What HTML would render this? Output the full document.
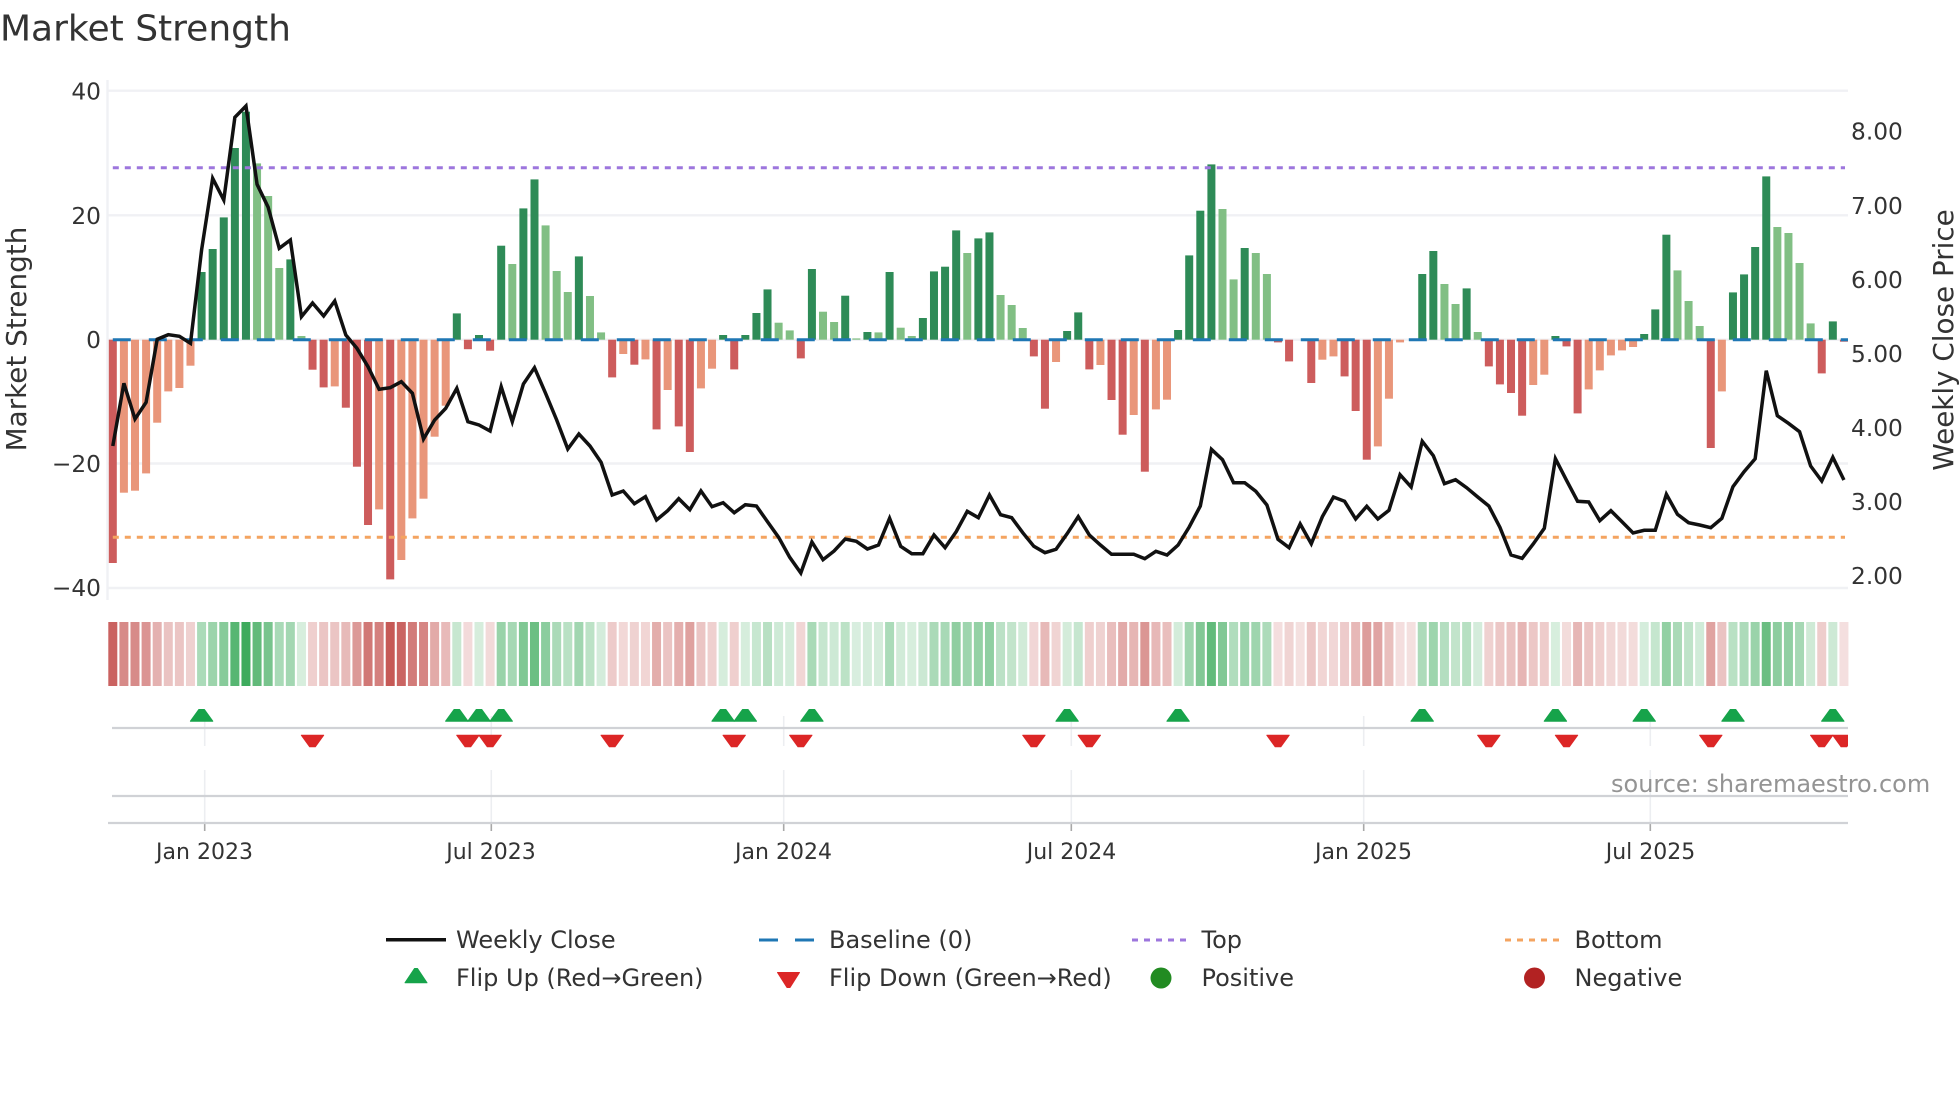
<!DOCTYPE html>
<html><head><meta charset="utf-8"><title>Market Strength</title>
<style>
html,body{margin:0;padding:0;background:#fff;width:1960px;height:1102px;overflow:hidden}
svg{display:block;position:absolute;left:0;top:0}
text{font-family:"DejaVu Sans","Liberation Sans",sans-serif;fill:#333}
.t{font-size:23.3px}.x{font-size:22px}.l{font-size:24px}
</style></head><body>
<svg id="s" width="1960" height="1102" viewBox="0 0 1960 1102" xmlns="http://www.w3.org/2000/svg">
<defs><clipPath id="c"><rect x="108" y="700" width="1740" height="60"/></clipPath></defs>
<g id="grid" stroke="#f0f1f4" stroke-width="2.400">
<line x1="108" x2="1848" y1="90.7" y2="90.7"/><line x1="108" x2="1848" y1="215.3" y2="215.3"/><line x1="108" x2="1848" y1="339.7" y2="339.7"/><line x1="108" x2="1848" y1="463.5" y2="463.5"/><line x1="108" x2="1848" y1="588" y2="588"/>
<line x1="107.500" x2="107.500" y1="80" y2="600"/>
</g>
<g id="vg"></g>
<g id="bars"></g>
<line x1="112.800" x2="1848" y1="339.700" y2="339.700" stroke="#1f77b4" stroke-width="3" stroke-dasharray="18 18"/>
<line x1="112.800" x2="1845" y1="167.700" y2="167.700" stroke="#9d76dd" stroke-width="3" stroke-dasharray="6 6"/>
<line x1="112.800" x2="1845" y1="537.300" y2="537.300" stroke="#f4a460" stroke-width="3" stroke-dasharray="6 6"/>
<polyline id="ln" fill="none" stroke="#111" stroke-width="3.500" stroke-linejoin="miter"/>
<g id="heat"></g>
<g stroke="#d0d2d6" stroke-width="2.200"><line x1="112" x2="1848" y1="728" y2="728"/><line x1="112" x2="1848" y1="796" y2="796"/><line x1="108" x2="1848" y1="823" y2="823"/></g>
<g id="flips" clip-path="url(#c)"></g>

<text x="0" y="40.500" font-size="36">Market Strength</text>
<g class="t" text-anchor="end">
<text class="t" x="101" y="99.300">40</text><text class="t" x="101" y="224">20</text><text class="t" x="101" y="348">0</text><text class="t" x="101" y="472">−20</text><text class="t" x="101" y="596">−40</text>
</g>
<g>
<text class="t" x="1851" y="139.300">8.00</text><text class="t" x="1851" y="214">7.00</text><text class="t" x="1851" y="288">6.00</text><text class="t" x="1851" y="362">5.00</text><text class="t" x="1851" y="436">4.00</text><text class="t" x="1851" y="510">3.00</text><text class="t" x="1851" y="584">2.00</text>
</g>
<text transform="translate(26 339) rotate(-90)" text-anchor="middle" font-size="27.800">Market Strength</text>
<text transform="translate(1953 340) rotate(-90)" text-anchor="middle" font-size="27.800">Weekly Close Price</text>
<g text-anchor="middle">
<text class="x" x="204.500" y="859">Jan 2023</text><text class="x" x="491" y="859">Jul 2023</text><text class="x" x="783.500" y="859">Jan 2024</text><text class="x" x="1071.500" y="859">Jul 2024</text><text class="x" x="1363.500" y="859">Jan 2025</text><text class="x" x="1650.500" y="859">Jul 2025</text>
</g>
<text x="1611" y="792" font-size="24" style="fill:#949494">source: sharemaestro.com</text>

<line x1="386" x2="446" y1="939.700" y2="939.700" stroke="#111" stroke-width="3.500"/>
<line x1="759" x2="815" y1="940" y2="940" stroke="#1f77b4" stroke-width="3" stroke-dasharray="19 17"/>
<line x1="1132" x2="1188" y1="940" y2="940" stroke="#9d76dd" stroke-width="3" stroke-dasharray="6 6"/>
<line x1="1505" x2="1561" y1="940" y2="940" stroke="#f4a460" stroke-width="3" stroke-dasharray="6 6"/>
<path d="M414.500 968.500H417.500L427 982.800H405Z" fill="#16a34a" stroke="#16a34a" stroke-width="1" stroke-linejoin="round"/>
<path d="M787 987.500H790L799.500 972.500H777.500Z" fill="#dc2626" stroke="#dc2626" stroke-width="1" stroke-linejoin="round"/>
<circle cx="1161" cy="978" r="10.500" fill="#228b22"/>
<circle cx="1534.500" cy="978" r="10.500" fill="#b22222"/>
<text class="l" x="456" y="948">Weekly Close</text><text class="l" x="829" y="948">Baseline (0)</text><text class="l" x="1201.500" y="948">Top</text><text class="l" x="1574.500" y="948">Bottom</text>
<text class="l" x="456" y="986">Flip Up (Red→Green)</text><text class="l" x="829" y="986">Flip Down (Green→Red)</text><text class="l" x="1201.500" y="986">Positive</text><text class="l" x="1574.500" y="986">Negative</text>
</svg>
<script>
(function(){
var B="R-223.3 S-153 S-151 S-133.7 S-83 S-51.7 S-48.3 S-26 D67.7 D90.7 D122.3 D191.7 D228 L176.3 L143.7 L71.7 D80.3 L3.7 R-30 R-47.7 S-46.7 R-68 R-127 R-185.3 S-169.7 R-239.7 S-220.3 S-178.7 S-159 S-97 S-66 D26.3 R-9.5 D4.7 R-11 D94 L75.7 D131.3 D160.3 L114.3 L68.7 L47.7 D83.3 L43.7 L7.3 R-37.7 S-14.3 R-25 S-19.7 R-89.7 S-50.3 R-86.7 R-112.3 S-48.7 S-29 D4.7 R-29.7 D4.7 D26.7 D50.3 L17 L9.3 R-18.7 D70.7 L28 L17.7 D44 L1.3 D7.7 L7.3 D67.7 L12 L3.7 D21.7 D68.3 D73 D109.3 L86.7 D101.3 D107.3 L44.7 L34.7 L11.7 R-16.7 R-69 S-22.3 D8.7 D27.3 R-29.7 S-25.3 R-60.3 R-95 S-75.3 R-132 S-69.7 S-60 D9.7 D84.3 D129 D175.3 L130.7 L60.3 D91.7 L86.7 L65.7 R-2.7 R-21.7 R0 R-43.3 S-20 S-16.7 R-36.7 R-71.3 R-120 S-106.7 S-59 S-2.7 S0 D65.7 D88.7 L55.7 L35.7 D51.3 L7.7 R-26.7 R-44.7 R-53.3 R-76 S-45.3 S-35 D3.7 R-6.7 R-73.7 S-49.7 S-30.7 S-15.7 S-10.7 S-7.3 D5.7 D30.3 D105 L69.3 L38.7 L13.7 R-108.3 S-51.7 D47.3 D65.3 D92.7 D163.3 L112.7 L106.7 L76.7 L16.3 R-33.7 D18.3 R-2".split(" ");
var Y=[446,383.3,419,402.3,339.3,334.7,336.3,343.3,250,178.3,200,117.3,106,184.3,207.3,248.3,240,316.7,303,316,301,335,348.3,366.7,389.3,387.7,381.7,393.3,439,420,408.3,388.3,421.7,425,431,386.7,421.7,384,367.7,393.3,420,449,434,446,462.3,495,491,503.7,496.7,520,510.7,498.7,509.7,491,506.7,502.7,512.7,504.7,506,521.7,537.3,557.3,573,542,559.7,551,539,541.3,549,545,518.3,546.3,553.7,553.7,535,547.7,531.7,511.3,517.7,495,514.7,517.7,532.7,546.3,552.7,549.3,533.7,516.7,535,545,554.3,554.3,554.3,558.7,551.3,555,545,527,506,449.3,459.7,482.7,482.7,491.3,505,539.3,547.7,524,543.7,516.7,497,501.3,519,506.3,519,510.3,474.7,487,441.3,455.7,483.7,479.7,487.7,497,506,527.3,555,558.3,544,528.3,458.7,480.3,501.3,502,520.7,510.7,521.7,533,530.3,530.3,494.3,514.3,522.7,525,527.7,518.3,486.7,471.7,458.7,370.7,415.7,423.3,431.7,466,481,457.3,480];
var C={D:"#2e8b57",L:"#81bf84",R:"#cd5c5c",S:"#e9967a"};
var X0=112.8,DX=11.097,Z=339.7,NS="http://www.w3.org/2000/svg";
function add(p,n,a){var e=document.createElementNS(NS,n);for(var k in a)e.setAttribute(k,a[k]);document.getElementById(p).appendChild(e);}
var pts=[];
B.forEach(function(b,i){
 var t=b[0],v=parseFloat(b.slice(1)),x=X0+i*DX;
 if(v!==0)add("bars","rect",{x:(x-4).toFixed(2),y:(v>0?Z-v:Z).toFixed(2),width:8,height:Math.abs(v).toFixed(2),fill:C[t]});
 var a=0.18+0.78*Math.abs(v)/240,pos=(t=="D"||t=="L");
 add("heat","rect",{x:(x-4.5).toFixed(2),y:622,width:9,height:64,fill:pos?"#2ea44f":"#c4524f","fill-opacity":a.toFixed(3)});
 pts.push(x.toFixed(2)+","+Y[i]);
});
document.getElementById("ln").setAttribute("points",pts.join(" "));
[8,31,33,35,55,57,63,86,96,118,130,138,146,155].forEach(function(i){var x=X0+i*DX;
 add("flips","path",{d:"M"+(x-2.8).toFixed(1)+" 709.5H"+(x+2.8).toFixed(1)+"L"+(x+11.2).toFixed(1)+" 721.2H"+(x-11.2).toFixed(1)+"Z",fill:"#16a34a",stroke:"#16a34a","stroke-width":1,"stroke-linejoin":"round"});});
[18,32,34,45,56,62,83,88,105,124,131,144,154,156].forEach(function(i){var x=X0+i*DX;
 add("flips","path",{d:"M"+(x-2.8).toFixed(1)+" 746.8H"+(x+2.8).toFixed(1)+"L"+(x+11.2).toFixed(1)+" 735.2H"+(x-11.2).toFixed(1)+"Z",fill:"#dc2626",stroke:"#dc2626","stroke-width":1,"stroke-linejoin":"round"});});
[204.7,491.3,783.7,1071.3,1363.7,1650.3].forEach(function(x){
 add("vg","line",{x1:x,x2:x,y1:716,y2:746,stroke:"#eceef1","stroke-width":1.6});
 add("vg","line",{x1:x,x2:x,y1:770,y2:823,stroke:"#eceef1","stroke-width":1.6});
 add("vg","line",{x1:x,x2:x,y1:823,y2:831,stroke:"#a8a8a8","stroke-width":1.6});
});
})();
</script>
</body></html>
